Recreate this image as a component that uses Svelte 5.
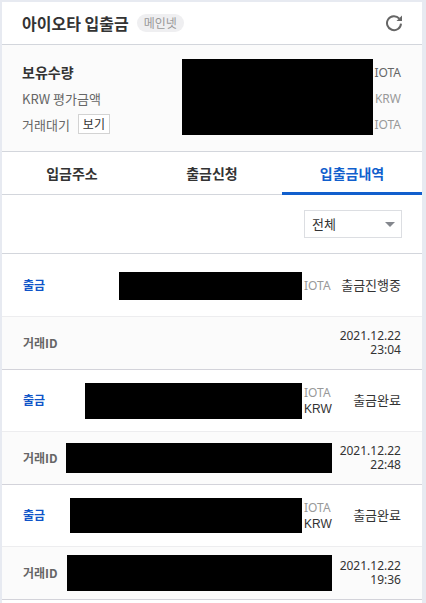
<script lang="ts">
	type Transaction = {
		type: string;
		amountWidth: number;
		amountHeight: number;
		krw: boolean;
		status: string;
		idWidth: number;
		idHeight: number;
		date: string;
		time: string;
	};

	const tabs = ['입금주소', '출금신청', '입출금내역'];
	let activeTab = $state(2);
	let filter = $state('전체');

	// Amounts and transaction ids are masked, so only the mask sizes are kept
	const transactions: Transaction[] = [
		{ type: '출금', amountWidth: 183, amountHeight: 28, krw: false, status: '출금진행중', idWidth: 0, idHeight: 0, date: '2021.12.22', time: '23:04' },
		{ type: '출금', amountWidth: 217, amountHeight: 36, krw: true, status: '출금완료', idWidth: 266, idHeight: 30, date: '2021.12.22', time: '22:48' },
		{ type: '출금', amountWidth: 232, amountHeight: 35, krw: true, status: '출금완료', idWidth: 265, idHeight: 36, date: '2021.12.22', time: '19:36' }
	];
</script>

<main class="wallet">
	<header class="header">
		<h1>아이오타 입출금</h1>
		<span class="network">메인넷</span>
		<button class="refresh" type="button" aria-label="새로고침">
			<svg width="18" height="18" viewBox="0 0 18 18" aria-hidden="true">
				<path d="M14.3 4.6A7 7 0 1 0 16 9.6" fill="none" stroke="#666" stroke-width="2" />
				<path d="M17 1.5V7h-5.5z" fill="#666" />
			</svg>
		</button>
	</header>

	<section class="summary">
		<ul class="labels">
			<li class="strong">보유수량</li>
			<li>KRW 평가금액</li>
			<li>거래대기 <button class="view" type="button">보기</button></li>
		</ul>
		<div class="mask balance"></div>
		<ul class="units">
			<li class="dark">IOTA</li>
			<li>KRW</li>
			<li>IOTA</li>
		</ul>
	</section>

	<nav class="tabs">
		{#each tabs as tab, i}
			<button type="button" class:active={activeTab === i} onclick={() => (activeTab = i)}>{tab}</button>
		{/each}
	</nav>

	<div class="filter">
		<div class="select">
			<select bind:value={filter} aria-label="내역 구분">
				<option>전체</option>
			</select>
		</div>
	</div>

	<table>
		<colgroup>
			<col class="col-name" />
			<col />
			<col class="col-status" />
		</colgroup>
		{#each transactions as tx}
			<tbody>
				<tr class="entry">
					<th class="type" scope="row">{tx.type}</th>
					<td>
						<div class="amount">
							<div class="mask" style="width: {tx.amountWidth}px; height: {tx.amountHeight}px"></div>
							<div class="currency">
								<span class="coin">IOTA</span>
								{#if tx.krw}<span class="krw">KRW</span>{/if}
							</div>
						</div>
					</td>
					<td class="status">{tx.status}</td>
				</tr>
				<tr class="detail">
					<th scope="row">거래ID</th>
					<td>
						{#if tx.idWidth}
							<div class="mask id" style="width: {tx.idWidth}px; height: {tx.idHeight}px"></div>
						{/if}
					</td>
					<td class="date">
						<span>{tx.date}</span>
						<span>{tx.time}</span>
					</td>
				</tr>
			</tbody>
		{/each}
	</table>
</main>

<style>
	:global(body) {
		background: #e7eaf1;
		font-family: "Noto Sans CJK KR", sans-serif;
		font-size: 13px;
		color: #333;
	}

	.wallet {
		margin: 2px 4px 0 2px;
		padding-bottom: 4px;
		background: #fff;
	}

	button,
	select {
		font-family: inherit;
		color: inherit;
		cursor: pointer;
	}

	.mask {
		background: #000;
	}

	.header {
		display: flex;
		align-items: center;
		height: 42px;
		padding: 0 19px 0 20px;
		border-bottom: 1px solid #d3d6dc;
	}

	h1 {
		margin: 0;
		font-size: 16px;
		line-height: 24px;
		font-weight: 700;
	}

	.network {
		margin-left: 8px;
		padding: 0 7px;
		border-radius: 9px;
		background: #efeff1;
		font-size: 12px;
		line-height: 18px;
		color: #999;
	}

	.refresh {
		display: flex;
		margin-left: auto;
		padding: 0;
		border: 0;
		background: none;
	}

	.summary {
		display: flex;
		padding: 14px 21px 14px 20px;
		border-bottom: 1px solid #d3d6dc;
		background: #fbfbfb;
		color: #666;
	}

	ul {
		margin: 0;
		padding: 0;
		list-style: none;
	}

	li {
		display: flex;
		align-items: center;
		height: 26px;
	}

	.strong {
		font-size: 14px;
		font-weight: 700;
		color: #333;
	}

	.view {
		height: 20px;
		margin-left: 8px;
		padding: 0 4px;
		border: 1px solid #d3d3d3;
		background: #fff;
		font-size: 12px;
		line-height: 18px;
		color: #333;
	}

	.balance {
		width: 191px;
		height: 76px;
		margin-left: auto;
	}

	.units {
		width: 28px;
		font-family: "Noto Sans", sans-serif;
		font-size: 12px;
		color: #999;
	}

	.units li {
		justify-content: flex-end;
	}

	.units .dark {
		color: #666;
	}

	.tabs {
		display: grid;
		grid-template-columns: repeat(3, 1fr);
	}

	.tabs button {
		height: 43px;
		padding: 0;
		border: 0;
		border-bottom: 1px solid #d3d6dc;
		background: #fff;
		font-size: 14px;
		font-weight: 700;
	}

	.tabs .active {
		padding-top: 2px;
		border-bottom: 3px solid #115fcd;
		color: #115fcd;
	}

	.filter {
		display: flex;
		justify-content: flex-end;
		padding: 15px 20px;
		border-bottom: 1px solid #d3d6dc;
	}

	.select {
		position: relative;
	}

	.select::after {
		content: "";
		position: absolute;
		top: 12px;
		right: 7px;
		border: 5px solid transparent;
		border-top-color: #84878d;
		border-bottom: 0;
		pointer-events: none;
	}

	select {
		display: block;
		appearance: none;
		width: 98px;
		height: 28px;
		padding: 0 7px 2px;
		border: 1px solid #dcdee2;
		border-radius: 0;
		background: #fff;
		font-size: 13px;
	}

	table {
		width: 100%;
		padding-top: 1px;
		table-layout: fixed;
		border-spacing: 0;
	}

	.col-name {
		width: 64px;
	}

	.col-status {
		width: 90px;
	}

	th,
	td {
		box-sizing: border-box;
		padding: 0;
		vertical-align: middle;
	}

	th {
		padding: 0 0 2px 21px;
		font-size: 12px;
		text-align: left;
		white-space: nowrap;
		color: #666;
	}

	.entry th,
	.entry td {
		height: 62px;
		border-bottom: 1px solid #ededef;
	}

	.detail th,
	.detail td {
		height: 53px;
		border-bottom: 1px solid #d3d3da;
		background: #fbfbfb;
	}

	.entry .type {
		color: #0f54c8;
	}

	.amount {
		display: flex;
		align-items: center;
		justify-content: flex-end;
		gap: 2px;
	}

	.currency {
		display: flex;
		flex-direction: column;
		width: 28px;
		line-height: 16px;
		font-size: 12px;
	}

	.coin {
		font-family: "Noto Sans", sans-serif;
		color: #999;
	}

	.krw {
		font-family: "Liberation Sans", sans-serif;
	}

	.id {
		margin-left: auto;
	}

	.status {
		padding: 0 21px 2px 0;
		text-align: right;
		white-space: nowrap;
	}

	.date {
		padding-right: 21px;
		font-family: "Noto Sans", sans-serif;
		font-size: 12px;
		line-height: 14px;
		text-align: right;
	}

	.date span {
		display: block;
	}
</style>
